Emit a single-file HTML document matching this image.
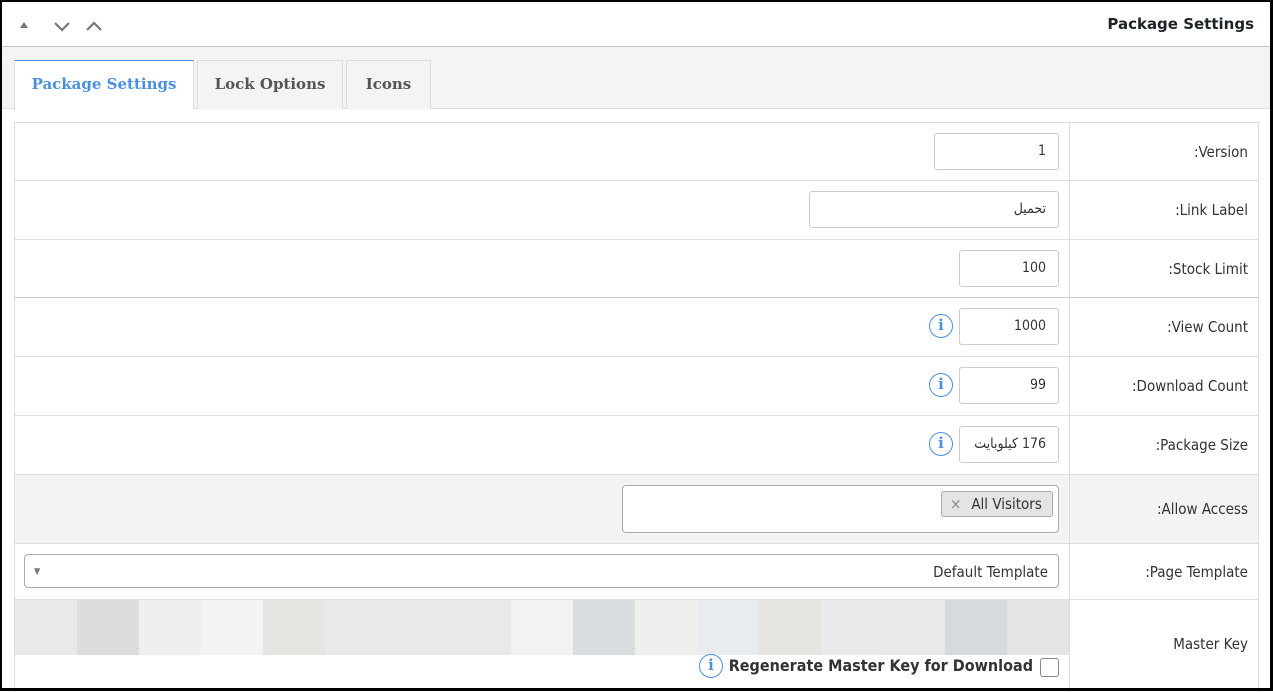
<!DOCTYPE html>
<html><head><meta charset="utf-8"><style>
*{box-sizing:border-box;margin:0;padding:0}
body{width:1273px;height:691px;background:#fff;font-family:"DejaVu Sans","Liberation Sans",sans-serif;position:relative;overflow:hidden;color:#333}
.frame{position:absolute;left:0;top:0;width:1273px;height:691px;border:2px solid #000;border-right-width:3px;border-bottom-width:3px}
.hdr{position:absolute;left:2px;top:2px;width:1268px;height:45px;border-bottom:1px solid #c3c4c7;background:#fff}
.title{position:absolute;right:16px;top:13px;font-size:15px;font-weight:bold;color:#1d2327}
.tabbar{position:absolute;left:2px;top:47px;width:1268px;height:62px;background:#f4f4f4;border-bottom:1px solid #ddd}
.tab{position:absolute;top:13px;height:49px;border:1px solid #ddd;border-bottom:none;background:#f4f4f4;font-family:"DejaVu Serif","Liberation Serif",serif;font-weight:bold;font-size:15px;color:#555;text-align:center;line-height:46px}
.tab.act{background:#fff;color:#4a8fe0;border-top:1px solid #4a8fe0;height:50px}
.row{position:absolute;left:14px;width:1245px;border-bottom:1px solid #ddd;border-left:1px solid #ddd;border-right:1px solid #ddd}
.lab{position:absolute;left:1054px;top:0;bottom:0;width:190px;border-left:1px solid #ddd;text-align:right;padding-right:11px;font-size:15px;color:#333;font-family:"DejaVu Sans Condensed","DejaVu Sans",sans-serif}
.inp{position:absolute;border:1px solid #ccc;border-radius:3px;background:#fff;height:37px;text-align:right;padding-right:12px;line-height:35px;font-size:14px;font-family:"DejaVu Sans Condensed","DejaVu Sans","Noto Sans CJK SC",sans-serif}
.info{position:absolute;width:24px;height:24px;border:1.5px solid #4a8fe0;border-radius:50%;color:#4a8fe0;font-weight:bold;font-family:"DejaVu Serif",serif;font-size:15px;text-align:center;line-height:21px}
.blk{position:absolute;top:0;height:55px;width:62px}
</style></head><body>
<div class="hdr">
<svg style="position:absolute;left:16px;top:16px" width="90" height="14">
<path d="M2 10 L6 4 L10 10Z" fill="#777"/>
<path d="M37 5 L44 12 L51 5" stroke="#777" stroke-width="2.2" fill="none"/>
<path d="M69 12 L76 5 L83 12" stroke="#777" stroke-width="2.2" fill="none"/>
</svg>
<div class="title">Package Settings</div>
</div>
<div class="tabbar">
<div class="tab act" style="left:12px;width:180px">Package Settings</div>
<div class="tab" style="left:195px;width:146px">Lock Options</div>
<div class="tab" style="left:344px;width:85px">Icons</div>
</div>

<div class="row" style="top:122px;height:59px;border-top:1px solid #ddd"><div class="lab" style="line-height:58px">:Version</div><div class="inp" style="left:919px;top:10px;width:125px">1</div></div>
<div class="row" style="top:181px;height:59px"><div class="lab" style="line-height:58px">:Link Label</div><div class="inp" style="left:794px;top:10px;width:250px">تحميل</div></div>
<div class="row" style="top:240px;height:58px;border-bottom-color:#ccc"><div class="lab" style="line-height:58px">:Stock Limit</div><div class="inp" style="left:944px;top:10px;width:100px">100</div></div>
<div class="row" style="top:298px;height:59px"><div class="lab" style="line-height:58px">:View Count</div><div class="inp" style="left:944px;top:10px;width:100px">1000</div><div class="info" style="left:914px;top:16px">i</div></div>
<div class="row" style="top:357px;height:59px"><div class="lab" style="line-height:58px">:Download Count</div><div class="inp" style="left:944px;top:10px;width:100px">99</div><div class="info" style="left:914px;top:16px">i</div></div>
<div class="row" style="top:416px;height:59px"><div class="lab" style="line-height:58px">:Package Size</div><div class="inp" dir="rtl" style="left:944px;top:10px;width:100px;padding-right:12px;text-align:right;overflow:hidden;white-space:nowrap">176 كيلوبايت</div><div class="info" style="left:914px;top:16px">i</div></div>
<div class="row" style="top:475px;height:69px;background:#f3f3f3"><div class="lab" style="line-height:68px">:Allow Access</div>
<div style="position:absolute;left:607px;top:10px;width:437px;height:48px;border:1px solid #aaa;border-radius:4px;background:#fff">
<div style="position:absolute;right:5px;top:5px;width:112px;height:26px;border:1px solid #aaa;border-radius:3px;background:#e4e4e4;font-size:15px;line-height:24px;font-family:'DejaVu Sans Condensed','DejaVu Sans',sans-serif;padding-left:8px;color:#333"><span style="color:#888;margin-right:10px">×</span>All Visitors</div></div></div>
<div class="row" style="top:544px;height:56px"><div class="lab" style="line-height:56px">:Page Template</div>
<div style="position:absolute;left:9px;top:10px;width:1035px;height:34px;border:1px solid #aaa;border-radius:4px;background:#fff;font-size:15px;line-height:34px;text-align:right;padding-right:10px;font-family:'DejaVu Sans Condensed','DejaVu Sans',sans-serif">Default Template<span style="position:absolute;left:9px;top:0;font-size:9px;color:#777">▼</span></div></div>
<div class="row" style="top:600px;height:92px;border-bottom:none"><div class="lab" style="line-height:88px">Master Key</div>
<div style="position:absolute;left:0;top:0;width:1054px;height:55px;overflow:hidden">
<div class="blk" style="left:0;background:#e9e8ea"></div><div class="blk" style="left:62px;background:#dddddd"></div><div class="blk" style="left:124px;background:#efefed"></div><div class="blk" style="left:186px;background:#f3f3f3"></div><div class="blk" style="left:248px;background:#e6e5e2"></div><div class="blk" style="left:310px;background:#e9e9e9"></div><div class="blk" style="left:372px;background:#eae8e8"></div><div class="blk" style="left:434px;background:#e8e9ea"></div><div class="blk" style="left:496px;background:#f2f2f2"></div><div class="blk" style="left:558px;background:#dbdee1"></div><div class="blk" style="left:620px;background:#efefed"></div><div class="blk" style="left:682px;background:#e8ebef"></div><div class="blk" style="left:744px;background:#e5e4e0"></div><div class="blk" style="left:806px;background:#e9eaeb"></div><div class="blk" style="left:868px;background:#e9e9e9"></div><div class="blk" style="left:930px;background:#d7dadd"></div><div class="blk" style="left:992px;background:#e3e4e6"></div></div>
<div style="position:absolute;left:1025px;top:58px;width:19px;height:19px;border:1px solid #888;border-radius:3px"></div>
<div style="position:absolute;right:225px;top:56px;font-size:16px;font-weight:bold;color:#333;font-family:'DejaVu Sans Condensed','DejaVu Sans',sans-serif">Regenerate Master Key for Download</div>
<div class="info" style="left:684px;top:54px">i</div></div>
<div class="frame"></div>
</body></html>
